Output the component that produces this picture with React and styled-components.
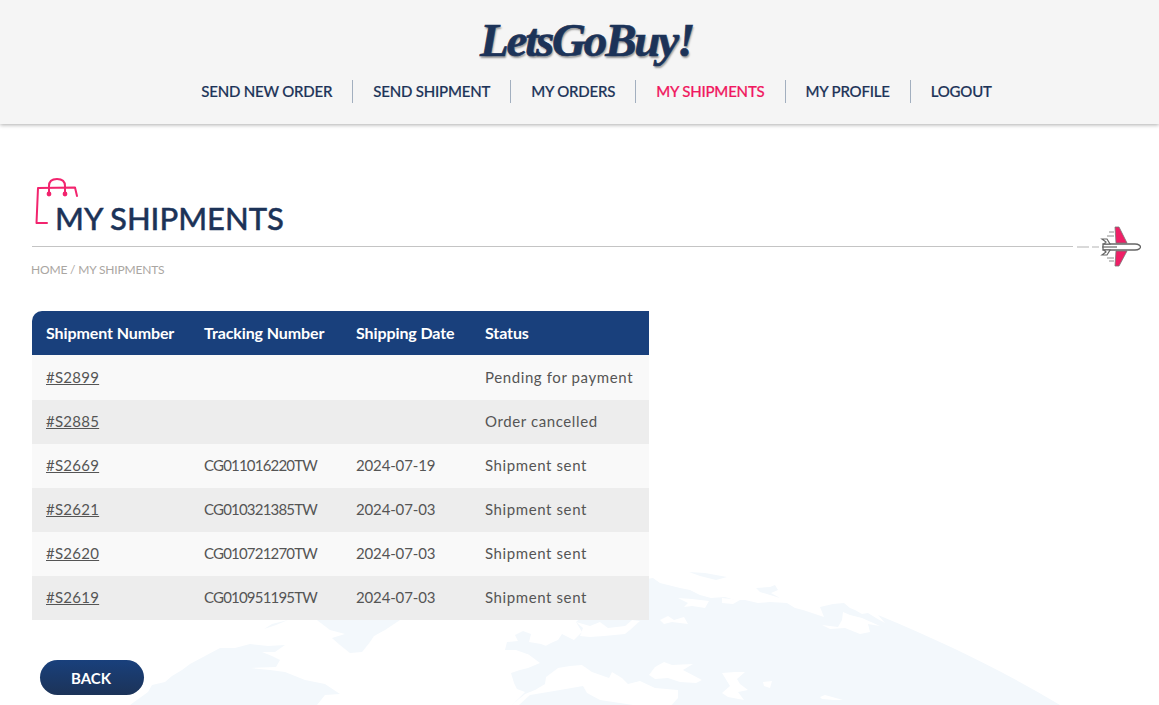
import React from "react";
import styled, { createGlobalStyle } from "styled-components";

const FONT = `Lato, "Noto Sans", sans-serif`;

const Global = createGlobalStyle`
  html, body { margin: 0; padding: 0; background: #fff; }
  body { font-family: ${FONT}; overflow: hidden; }
`;

const Page = styled.div`
  position: relative;
  height: 705px;
  overflow: hidden;
`;

const WorldMap = styled.svg`
  position: absolute;
  left: 0;
  top: 0;
  width: 1159px;
  height: 705px;
  pointer-events: none;
`;

const Header = styled.header`
  position: relative;
  height: 124px;
  background: #f5f5f5;
  box-shadow: 0 1px 4px rgba(0, 0, 0, 0.32);
  display: flex;
  flex-direction: column;
  align-items: center;
`;

const Logo = styled.div`
  margin: 8px 0 0 14px;
  height: 65px;
  font-family: "Liberation Serif", serif;
  font-style: italic;
  font-weight: 700;
  font-size: 47px;
  line-height: 65px;
  letter-spacing: -2.2px;
  color: #1c3358;
  -webkit-text-stroke: 0.7px #1c3358;
  text-shadow: 1px 2px 2px rgba(0, 0, 0, 0.4);
`;

const Nav = styled.nav`
  display: flex;
  align-items: center;
  margin: 7px 0 0 34px;
`;

const NavItem = styled.a`
  display: block;
  padding: 0 20px;
  height: 23px;
  line-height: 23px;
  font-size: 15px;
  font-weight: 500;
  letter-spacing: -0.2px;
  -webkit-text-stroke: 0.2px currentColor;
  white-space: nowrap;
  color: ${(p) => (p.$active ? "#f0185f" : "#1c3358")};
  border-right: ${(p) => (p.$last ? "none" : "1px solid #a2afbf")};
`;

const Main = styled.main`
  position: relative;
  padding: 52px 18px 0 32px;
`;

const TitleRow = styled.div`
  display: flex;
  align-items: flex-end;
  height: 70px;
  padding-left: 3px;
`;

const BagIcon = styled.svg`
  display: block;
  width: 44px;
  height: 50px;
  margin: 0 -23px 19px 0;
  flex: none;
`;

const Title = styled.h1`
  margin: 0 0 8px -1px;
  font-size: 31px;
  line-height: 40px;
  font-weight: 500;
  letter-spacing: 0;
  -webkit-text-stroke: 0.4px #1c3358;
  color: #1c3358;
`;

const RuleRow = styled.div`
  display: flex;
  align-items: center;
  height: 1px;
`;

const Rule = styled.div`
  flex: 1;
  height: 1px;
  background: #c4c4c4;
`;

const PlaneIcon = styled.svg`
  display: block;
  width: 68px;
  height: 44px;
  flex: none;
`;

const Breadcrumb = styled.div`
  margin-top: 15px;
  margin-left: -1px;
  height: 15px;
  line-height: 15px;
  font-size: 12px;
  letter-spacing: -0.17px;
  color: #aaa6a2;
`;

const ShipTable = styled.table`
  margin-top: 34px;
  width: 617px;
  border-collapse: separate;
  border-spacing: 0;
  table-layout: fixed;
  font-size: 15px;
  color: #555;
`;

const HeadCell = styled.th`
  height: 44px;
  padding: 0 0 2px 14px;
  box-sizing: border-box;
  text-align: left;
  background: #19407c;
  color: #fff;
  font-size: 16px;
  font-weight: 700;
  letter-spacing: -0.1px;
  white-space: nowrap;
  &:first-child { border-top-left-radius: 10px; }
`;

const Row = styled.tr`
  background: ${(p) => (p.$even ? "#ededed" : "#f9f9f9")};
  &:first-child td { height: 45px; }
`;

const Cell = styled.td`
  height: 44px;
  padding: 0 0 2px 14px;
  box-sizing: border-box;
  white-space: nowrap;
  letter-spacing: ${(p) => p.$spacing};
`;

const ShipLink = styled.a`
  color: #555;
  text-decoration: underline;
`;

const BackButton = styled.button`
  display: block;
  margin: 40px 0 0 8px;
  width: 104px;
  height: 35px;
  padding: 0 2px 0 0;
  border: 0;
  border-radius: 18px;
  background: linear-gradient(180deg, #19407c, #1c3358);
  color: #fff;
  font-family: ${FONT};
  font-size: 15px;
  font-weight: 700;
`;

const rows = [
  ["#S2899", "", "", "Pending for payment"],
  ["#S2885", "", "", "Order cancelled"],
  ["#S2669", "CG011016220TW", "2024-07-19", "Shipment sent"],
  ["#S2621", "CG010321385TW", "2024-07-03", "Shipment sent"],
  ["#S2620", "CG010721270TW", "2024-07-03", "Shipment sent"],
  ["#S2619", "CG010951195TW", "2024-07-03", "Shipment sent"],
];

const navItems = [
  ["SEND NEW ORDER"],
  ["SEND SHIPMENT"],
  ["MY ORDERS"],
  ["MY SHIPMENTS", true],
  ["MY PROFILE"],
  ["LOGOUT"],
];

const Map = () => (
  <WorldMap viewBox="0 0 1159 705" aria-hidden="true">
    <g fill="#f3f8fc">
      {/* Eurasia */}
      <path d="M512 705 L525 692 L517 689 L514 683 L511 673 L520 670 L528 668 L540 663 L532 657 L525 652 L538 650 L551 643 L558 640 L562 634 L574 640 L582 632 L576 622 L600 600 L640 580 L653 578 L660 583 L668 585 L680 588 L690 590 L700 595 L711 598 L725 597 L735 600 L745 600 L758 603 L770 602 L787 603 L795 608 L803 610 L815 614 L824 617 L820 607 L833 604 L844 603 L850 608 L855 610 L862 614 L868 613 L876 618 L885 623 L878 615 C950 645 1005 672 1060 705 Z" />
      {/* British isles */}
      <path d="M505 650 L507 642 L518 641 L515 635 L523 631 L531 634 L529 642 L541 644 L549 647 L540 651 L527 654 L516 650 Z" />
      {/* small northern islands */}
      <path d="M689 572 L705 573 L727 577 L716 580 L700 576 Z" />
      <path d="M756 588 L770 587 L775 585 L778 590 L771 593 L780 598 L770 595 L760 592 Z" />
      {/* Greenland */}
      <path d="M317 620 L400 620 L385 630 L374 636 L370 642 L362 652 L350 653 L340 645 L332 638 L345 634 L330 630 Z" />
      <path d="M272 624 L288 620 L276 625 L264 629 Z" />
      {/* North America */}
      <path d="M130 705 L148 692 L152 685 L165 682 L172 676 L182 670 L190 664 L205 656 L220 648 L235 648 L250 644 L268 646 L285 645 L275 652 L262 652 L272 656 L280 660 L276 667 L250 668 L270 670 L285 672 L305 680 L325 684 L340 694 L325 695 L317 705 Z" />
    </g>
    <g fill="#fff">
      {/* Mediterranean */}
      <path d="M510 706 L525 694 L535 690 L545 684 L546 677 L558 668 L570 666 L582 665 L592 672 L609 678 L612 672 L622 678 L628 684 L640 681 L655 688 L678 690 L678 698 L671 706 L640 706 L620 703 L600 700 L587 693 L583 686 L560 690 L530 695 L518 706 Z" />
      {/* Black sea */}
      <path d="M649 675 L655 667 L664 662 L672 665 L693 664 L683 670 L702 680 L696 683 L680 682 L668 678 L655 679 Z" />
      {/* Caspian */}
      <path d="M722 673 L735 672 L745 672 L737 679 L740 684 L748 690 L738 692 L744 700 L728 697 L722 693 L730 686 Z" />
      {/* Aral, Balkhash */}
      <path d="M763 682 L772 681 L770 688 L764 686 Z" />
      <path d="M820 697 L825 695 L843 700 L834 700 L822 699 Z" />
      {/* Baltic and northern inlets */}
      <path d="M576 622 L590 626 L600 622 L608 628 L625 626 L632 620 L640 621 L630 630 L625 634 L604 636 L590 637 L580 636 L583 628 Z" />
      <path d="M660 620 L668 616 L674 620 L684 617 L688 624 L672 622 L664 624 Z" />
      <path d="M678 598 L692 599 L709 601 L705 608 L692 606 L684 607 L688 603 Z" />
      <path d="M722 598 L740 600 L733 604 L722 603 Z" />
      <path d="M822 625 L838 627 L842 620 L843 612 L850 615 L862 618 L880 626 L868 624 L870 632 L860 634 L845 628 L830 629 Z" />
    </g>
  </WorldMap>
);

const Bag = () => (
  <BagIcon viewBox="0 0 44 50" fill="none" stroke="#f2246e" strokeWidth="2" strokeLinecap="round" strokeLinejoin="round" aria-hidden="true">
    <path d="M12 46 L1.5 46 L3 11 L40 10.5 L42 19" />
    <path d="M14 17 L14 9 C14 4 17 2 22 2 C27 2 30 4 30 9 L30 17" />
    <circle cx="14" cy="17" r="1.4" fill="#f2246e" />
    <circle cx="30" cy="17" r="1.4" fill="#f2246e" />
  </BagIcon>
);

const Plane = () => (
  <PlaneIcon viewBox="0 0 68 44" aria-hidden="true">
    <path d="M4 22 H16" stroke="#c9c9c9" strokeWidth="1.4" />
    <path d="M19 22 H26" stroke="#c9c9c9" strokeWidth="1.4" />
    <path d="M42 2 L46 2 L54 18 L43 18 Z" fill="#ef1f66" stroke="#777" strokeWidth="0.8" />
    <path d="M42 41 L46 41 L54 26 L43 26 Z" fill="#ef1f66" stroke="#777" strokeWidth="0.8" />
    <path d="M30 19 H62 C66 19 67.5 21 67.5 22 C67.5 23 66 25 62 25 H30 Z" fill="#fff" stroke="#666" strokeWidth="1.3" />
    <path d="M29 22 H44" stroke="#666" strokeWidth="1.2" />
    <path d="M29 14 L34 14 L37 19 L31 19 L33 17 Z M29 30 L34 30 L37 25 L31 25 L33 27 Z" fill="#fff" stroke="#666" strokeWidth="1.2" />
    <path d="M36 7 H41 M34 11 H41 M36 36 H41 M34 33 H41" stroke="#8c8c8c" strokeWidth="1" />
  </PlaneIcon>
);

export default function App() {
  return (
    <Page>
      <Global />
      <Map />
      <Header>
        <Logo>LetsGoBuy!</Logo>
        <Nav>
          {navItems.map(([label, active], i) => (
            <NavItem key={label} $active={active} $last={i === navItems.length - 1}>
              {label}
            </NavItem>
          ))}
        </Nav>
      </Header>
      <Main>
        <TitleRow>
          <Bag />
          <Title>MY SHIPMENTS</Title>
        </TitleRow>
        <RuleRow>
          <Rule />
          <Plane />
        </RuleRow>
        <Breadcrumb>HOME / MY SHIPMENTS</Breadcrumb>
        <ShipTable>
          <colgroup>
            <col style={{ width: 158 }} />
            <col style={{ width: 152 }} />
            <col style={{ width: 129 }} />
            <col style={{ width: 178 }} />
          </colgroup>
          <thead>
            <tr>
              <HeadCell>Shipment Number</HeadCell>
              <HeadCell>Tracking Number</HeadCell>
              <HeadCell>Shipping Date</HeadCell>
              <HeadCell>Status</HeadCell>
            </tr>
          </thead>
          <tbody>
            {rows.map((r, i) => (
              <Row key={r[0]} $even={i % 2 === 1}>
                <Cell $spacing="0.25px"><ShipLink>{r[0]}</ShipLink></Cell>
                <Cell $spacing="-0.8px">{r[1]}</Cell>
                <Cell $spacing="-0.15px">{r[2]}</Cell>
                <Cell $spacing="0.6px">{r[3]}</Cell>
              </Row>
            ))}
          </tbody>
        </ShipTable>
        <BackButton>BACK</BackButton>
      </Main>
    </Page>
  );
}
